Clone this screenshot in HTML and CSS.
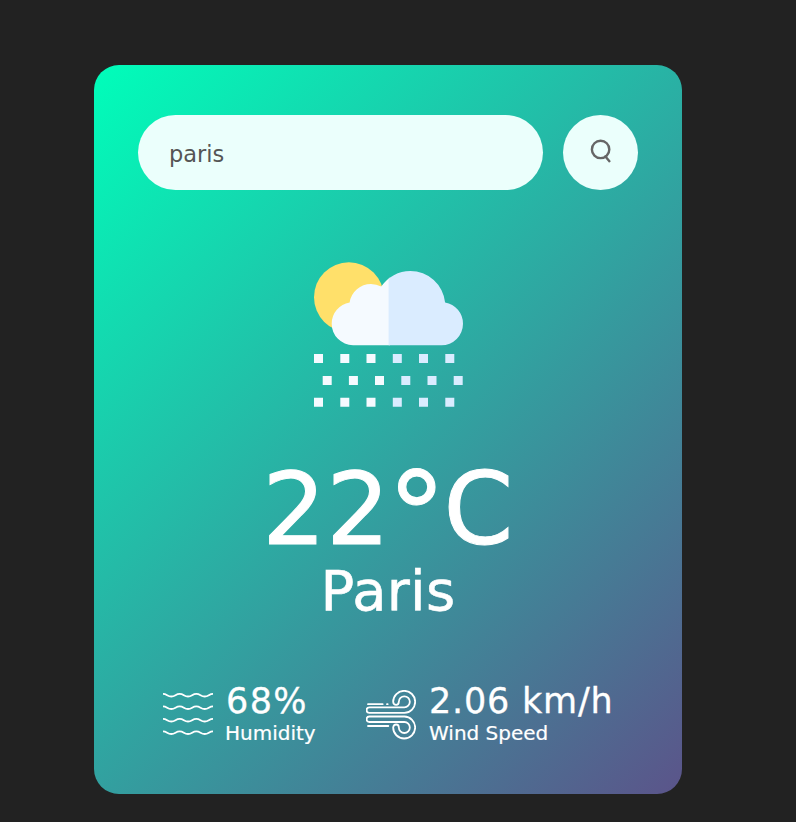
FILE: index.html
```html
<!DOCTYPE html>
<html lang="en">
<head>
<meta charset="utf-8">
<title>Weather</title>
<link rel="stylesheet" href="styles.css">
</head>
<body>
<main class="card">
  <form class="search">
    <input type="text" value="paris" aria-label="City" spellcheck="false">
    <button type="button" aria-label="Search">
      <svg width="22" height="26" viewBox="0 0 22 26" fill="none" stroke="#666" stroke-width="2.4" stroke-linecap="round"><circle cx="10.6" cy="10.4" r="8.7"/><path d="M15.4 17.400l4 4.800"/></svg>
    </button>
  </form>
  <section class="weather">
    <svg class="weather-icon" viewBox="0 0 150 146">
      <defs>
        <clipPath id="cloud"><circle cx="39.3" cy="61.7" r="21.6"/><circle cx="57" cy="43.6" r="21.6"/><circle cx="96.3" cy="44" r="35"/><circle cx="127.4" cy="61.7" r="21.6"/><path d="M39 44h88v39.3H39z"/></clipPath>
      </defs>
      <circle cx="34.9" cy="35.2" r="34.9" fill="#ffe06a"/>
      <g clip-path="url(#cloud)"><path fill="#f5faff" d="M0 0h76v90H0z"/><path fill="#daecff" d="M74.6 0H150v90H74.6z"/></g>
      <path fill="#f5faff" d="M0 92h9v9H0zM26.3 92h9v9h-9zM52.5 92h9v9h-9zM8.700 114h9v9h-9zM34.900 114h9v9h-9zM61 114h9v9h-9zM0 135.8h9v9H0zM26.3 135.8h9v9h-9zM52.5 135.8h9v9h-9z"/>
      <path fill="#daecff" d="M78.8 92h9v9h-9zM105 92h9v9h-9zM131.3 92h9v9h-9zM87.3 114h9v9h-9zM113.5 114h9v9h-9zM139.7 114h9v9h-9zM78.8 135.8h9v9h-9zM105 135.8h9v9h-9zM131.3 135.8h9v9h-9z"/>
    </svg>
    <h1>22<span class="degree">°</span>C</h1>
    <h2>Paris</h2>
  </section>
  <section class="details">
    <div class="detail humidity">
      <svg width="50" height="50" viewBox="0 0 50 50" fill="none" stroke="#fff" stroke-width="1.8">
        <path d="M0 3.8C4 3.8 4.3 6.5 8.3 6.5S12.7 3.8 16.7 3.8 21 6.5 25 6.5s4.3-2.7 8.3-2.7S37.7 6.5 41.7 6.5 46 3.8 50 3.8M0 16.300C4 16.300 4.3 19 8.3 19S12.7 16.300 16.7 16.300 21 19 25 19s4.3-2.7 8.3-2.7 4.4 2.7 8.4 2.7S46 16.300 50 16.300M0 28.800C4 28.800 4.3 31.500 8.3 31.500s4.400-2.7 8.4-2.7S21 31.500 25 31.500s4.3-2.7 8.3-2.7 4.4 2.7 8.4 2.7 4.3-2.7 8.3-2.7M0 41.300C4 41.300 4.3 44 8.3 44S12.7 41.300 16.7 41.300 21 44 25 44s4.3-2.7 8.3-2.7 4.4 2.7 8.4 2.7S46 41.300 50 41.300"/>
      </svg>
      <div><p class="value">68%</p><p class="label">Humidity</p></div>
    </div>
    <div class="detail wind">
      <svg width="50" height="50" viewBox="33 43 150 150" fill="none" stroke="#fff" stroke-width="5.4" stroke-linecap="round">
        <path id="gust" d="M43 95H148a16.5 16.5 0 1 0-16.5-16.5q0 9-8 9t-9-9A33 33 0 1 1 148 111.500H43a8.200 8.200 0 0 1 0-16.500z"/>
        <use href="#gust" transform="matrix(1 0 0 -1 0 234)"/>
        <path d="M39 85.500H83M96 85.500h2M39 151H100"/>
      </svg>
      <div><p class="value">2.06 km/h</p><p class="label">Wind Speed</p></div>
    </div>
  </section>
</main>
</body>
</html>
```
FILE: styles.css
```css
* {
  margin: 0;
  padding: 0;
  box-sizing: border-box;
  font-family: Verdana, "DejaVu Sans", sans-serif;
}

body {
  background: #222;
}

.card {
  width: 588px;
  height: 729px;
  margin: 65px 0 0 94px;
  padding: 50px 44px;
  border-radius: 25px;
  background: linear-gradient(135deg, #00feba, #5b548a);
  color: #fff;
}

.search {
  display: flex;
  gap: 20px;
}

.search input {
  width: 405px;
  height: 75px;
  padding: 3px 31px 0;
  border: 0;
  outline: 0;
  border-radius: 38px;
  background: #ebfffc;
  color: #555;
  font-size: 22.5px;
}

.search button {
  display: flex;
  align-items: center;
  justify-content: center;
  width: 75px;
  height: 75px;
  padding-bottom: 2px;
  border: 0;
  border-radius: 50%;
  background: #ebfffc;
}

.weather {
  display: flex;
  flex-direction: column;
  align-items: center;
  padding-top: 72px;
}

.weather-icon {
  width: 150px;
  height: 146px;
  margin-left: 2px;
}

h1 {
  height: 100px;
  margin-top: 52px;
  font-size: 100px;
  font-weight: 400;
  line-height: 100px;
  letter-spacing: 0.4px;
  white-space: nowrap;
  -webkit-text-stroke: 1px #fff;
}

.degree {
  font-size: 118px;
  line-height: 0;
  vertical-align: -12px;
  margin: 0 -3px;
}

h2 {
  margin-top: 1px;
  font-size: 56px;
  font-weight: 400;
  line-height: 60px;
  letter-spacing: 0.3px;
  -webkit-text-stroke: 0.6px #fff;
}

.details {
  display: flex;
  padding-left: 25px;
  margin-top: 59px;
}

.detail {
  display: flex;
  gap: 12px;
}

.humidity {
  width: 203px;
}

.humidity .value {
  padding-left: 1px;
  letter-spacing: 1.4px;
}

.wind {
  gap: 13px;
}

.detail svg {
  flex: none;
  margin-top: 10px;
}

.value {
  font-size: 35px;
  line-height: 43px;
  letter-spacing: 0.8px;
  white-space: nowrap;
  -webkit-text-stroke: 0.3px #fff;
}

.label {
  margin-top: -2px;
  font-size: 20px;
  line-height: 24px;
  white-space: nowrap;
  -webkit-text-stroke: 0.2px #fff;
}
```
